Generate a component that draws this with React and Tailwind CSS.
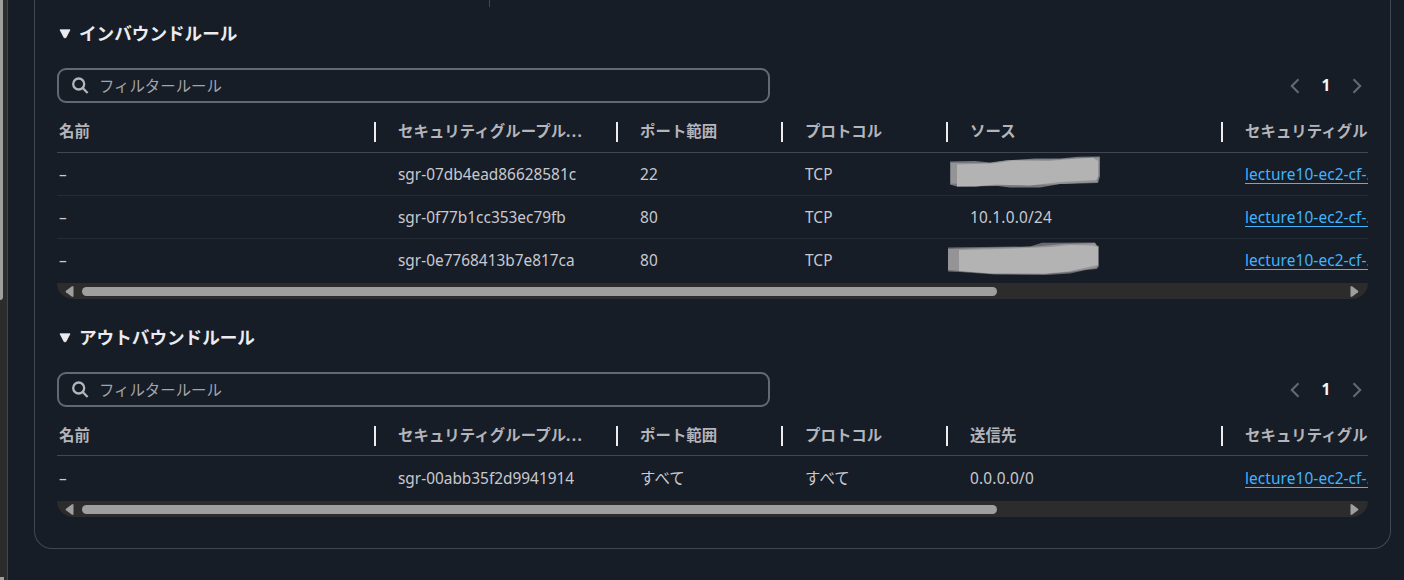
import React from "react";

const WIDTHS = ["w-[319px]", "w-[242px]", "w-[165px]", "w-[165px]", "w-[275px]", "w-[145px]"];

const INBOUND = {
  title: "インバウンドルール",
  target: "ソース",
  rows: [
    { id: "sgr-07db4ead86628581c", port: "22", protocol: "TCP", mask: "first", height: "h-[43px]", pad: "pt-[11px]" },
    { id: "sgr-0f77b1cc353ec79fb", port: "80", protocol: "TCP", source: "10.1.0.0/24", height: "h-[43px]", pad: "pt-[11px]" },
    { id: "sgr-0e7768413b7e817ca", port: "80", protocol: "TCP", mask: "second", height: "h-[44px]", pad: "pt-[11px]" },
  ],
};

const OUTBOUND = {
  title: "アウトバウンドルール",
  target: "送信先",
  rows: [
    { id: "sgr-00abb35f2d9941914", port: "すべて", protocol: "すべて", source: "0.0.0.0/0", height: "h-[45px]", pad: "pt-[12px]" },
  ],
};

function MaskFirst() {
  return (
    <svg className="absolute left-0 top-0 blur-[0.5px]" width="160" height="42" viewBox="948 153 160 42">
      <path d="M950 161.5L975 161L990 162.5L1005 160.5L1035 158.5L1060 158.5L1078 156.8L1100 156.5L1100 176L1098 183L1060 184L1040 187.5L1010 187.5L998 186L957 186.5L950 184.5Z" fill="#77787d" />
      <path d="M951 163L990 163L1010 160L1050 159.5L1099 157.5L1099 175L1097 182L1050 184.5L990 185.5L951 183.5Z" fill="#949497" />
      <path d="M957 164.5L993 163.5L1014 160.5L1048 161L1075 158.8L1093 157.8L1098 161L1098 177L1096 180L1060 182L1030 185.5L1010 185L996 184.5L976 186.5L957 186.5Z" fill="#b3b3b3" />
    </svg>
  );
}

function MaskSecond() {
  return (
    <svg className="absolute left-0 top-0 blur-[0.5px]" width="160" height="42" viewBox="948 239 160 42">
      <path d="M948 247.5L1030 246.5L1042 242.8L1095 242.5L1096 245.5L1099 246L1099 266L1097 269L1086 270L1070 273.5L1045 275L995 274.5L960 272L948 271.5Z" fill="#6a6b70" />
      <path d="M948 249L1036 246.5L1062 244L1095 243L1098 247L1098 266L1096 268L1070 272L1045 274L990 273.5L948 270Z" fill="#949497" />
      <path d="M959 250L1000 249L1050 247L1070 245L1093 245.5L1098 247L1098 265L1068 271.5L1045 273.5L992 273.5L959 271Z" fill="#b3b3b3" />
    </svg>
  );
}

function SearchField() {
  return (
    <div className="flex h-[35px] w-[713px] items-center rounded-[9px] border-2 border-[#656871] pl-[13px]">
      <svg width="17" height="17" viewBox="0 0 17 17" fill="none" stroke="#b4b4bb" strokeWidth="2.3">
        <circle cx="6.7" cy="7" r="5.5" />
        <path d="M10.7 11L15.6 16" />
      </svg>
      <span className="ml-[10px] pt-[2px] text-[15.4px] leading-[22px] text-[#a4a4ad]">フィルタールール</span>
    </div>
  );
}

function Pager() {
  return (
    <div className="flex h-[35px] items-center pr-[6px]">
      <svg width="10" height="16" viewBox="0 0 10 16" fill="none" stroke="#656871" strokeWidth="2.1">
        <path d="M8.5 1.2L1.8 8L8.5 14.8" />
      </svg>
      <span className="w-[52px] text-center text-[15.4px] font-bold text-[#f9f9fa]">1</span>
      <svg width="10" height="16" viewBox="0 0 10 16" fill="none" stroke="#656871" strokeWidth="2.1">
        <path d="M1.5 1.2L8.2 8L1.5 14.8" />
      </svg>
    </div>
  );
}

function HeaderRow({ target, height }) {
  const labels = ["名前", "セキュリティグループル", "ポート範囲", "プロトコル", target, "セキュリティグループ"];
  return (
    <div className={`flex border-b border-[#424650] ${height}`}>
      {labels.map((label, i) => (
        <div
          key={i}
          className={`flex h-[57px] shrink-0 items-center justify-between overflow-hidden whitespace-nowrap text-[15.4px] font-bold tracking-[0.06px] text-[#b4b4bb] ${WIDTHS[i]} ${i === 0 ? "pl-[2px]" : "pl-[22px]"}`}
        >
          <span>
            {label}
            {i === 1 && <span className="tracking-[1.4px]">...</span>}
          </span>
          {i < 5 && <span className="h-5 w-[2px] shrink-0 bg-[#ebebf0]" />}
        </div>
      ))}
    </div>
  );
}

function RuleRow({ rule, last }) {
  const cell = "shrink-0 overflow-hidden whitespace-nowrap pl-[22px]";
  return (
    <div className={`flex text-[15.4px] leading-[22px] text-[#c9c9d0] ${rule.height} ${last ? "" : "border-b border-[#232b37]"}`}>
      <div className={`${WIDTHS[0]} ${rule.pad} shrink-0 pl-[2px]`}>–</div>
      <div className={`${WIDTHS[1]} ${rule.pad} ${cell}`}>{rule.id}</div>
      <div className={`${WIDTHS[2]} ${rule.pad} ${cell} tracking-[0.1px]`}>{rule.port}</div>
      <div className={`${WIDTHS[3]} ${rule.pad} ${cell} tracking-[0.1px]`}>{rule.protocol}</div>
      <div className={`${WIDTHS[4]} ${rule.pad} relative shrink-0 pl-[22px] tracking-[0.2px]`}>
        {rule.source}
        {rule.mask === "first" && <MaskFirst />}
        {rule.mask === "second" && <MaskSecond />}
      </div>
      <div className={`${WIDTHS[5]} ${rule.pad} ${cell}`}>
        <a className="inline-block h-[20px] border-b border-[#42b4ff] tracking-[0.1px] text-[#42b4ff]">lecture10-ec2-cf-...</a>
      </div>
    </div>
  );
}

function ScrollTrack() {
  return (
    <div className="flex h-4 items-center rounded-b-[17px] bg-[#2c2c2c] pl-2 pr-[9px]">
      <svg className="mt-px" width="9" height="11" viewBox="0 0 9 10" preserveAspectRatio="none">
        <path d="M8.5 0.3V9.7L7 9.7L1 5.7Q0.3 5 1 4.3L7 0.3Z" fill="#9f9f9f" />
      </svg>
      <div className="ml-2 h-[9px] w-[915px] rounded-full bg-[#9f9f9f]" />
      <svg className="ml-auto mt-px" width="9" height="11" viewBox="0 0 9 10" preserveAspectRatio="none">
        <path d="M0.5 0.3V9.7L2 9.7L8 5.7Q8.7 5 8 4.3L2 0.3Z" fill="#9f9f9f" />
      </svg>
    </div>
  );
}

function RuleSection({ data, titleHeight, headerHeight }) {
  return (
    <section>
      <h2 className={`flex items-start text-[17.6px] font-bold leading-[26px] text-[#ebebf0] ${titleHeight}`}>
        <svg className="ml-[2px] mr-[9px] mt-[9px]" width="12" height="10" viewBox="0 0 12 10">
          <path d="M1 0.8H11L6.9 8.7H5.1Z" fill="#ebebf0" stroke="#ebebf0" strokeWidth="0.8" strokeLinejoin="round" />
        </svg>
        <span className="-ml-px">{data.title}</span>
      </h2>
      <div className="flex justify-between">
        <SearchField />
        <Pager />
      </div>
      <div className="overflow-hidden">
        <HeaderRow target={data.target} height={headerHeight} />
        {data.rows.map((rule, i) => (
          <RuleRow key={rule.id} rule={rule} last={i === data.rows.length - 1} />
        ))}
        <ScrollTrack />
      </div>
    </section>
  );
}

export default function App() {
  return (
    <div className="flex h-[580px] w-[1404px] overflow-hidden bg-[#161d26] font-['Noto_Sans','Noto_Sans_CJK_JP',sans-serif]">
      <div className="flex w-2 shrink-0 flex-col justify-between border-r border-[#424650] bg-[#2c2c2c]">
        <div className="h-[300px] w-[3px] rounded-br-[3px] bg-[#9f9f9f]" />
        <div className="h-[3px] w-[4px] bg-[#9f9f9f]" />
      </div>
      <main className="relative ml-[26px] h-[549px] w-[1357px] rounded-b-[18px] border-x border-b border-[#424650] px-[22px] pt-5">
        <div className="absolute left-[454px] top-0 h-[7px] w-px bg-[#424650]" />
        <RuleSection data={INBOUND} titleHeight="h-12" headerHeight="h-[50px]" />
        <div className="h-[25px]" />
        <RuleSection data={OUTBOUND} titleHeight="h-12" headerHeight="h-[49px]" />
      </main>
    </div>
  );
}
